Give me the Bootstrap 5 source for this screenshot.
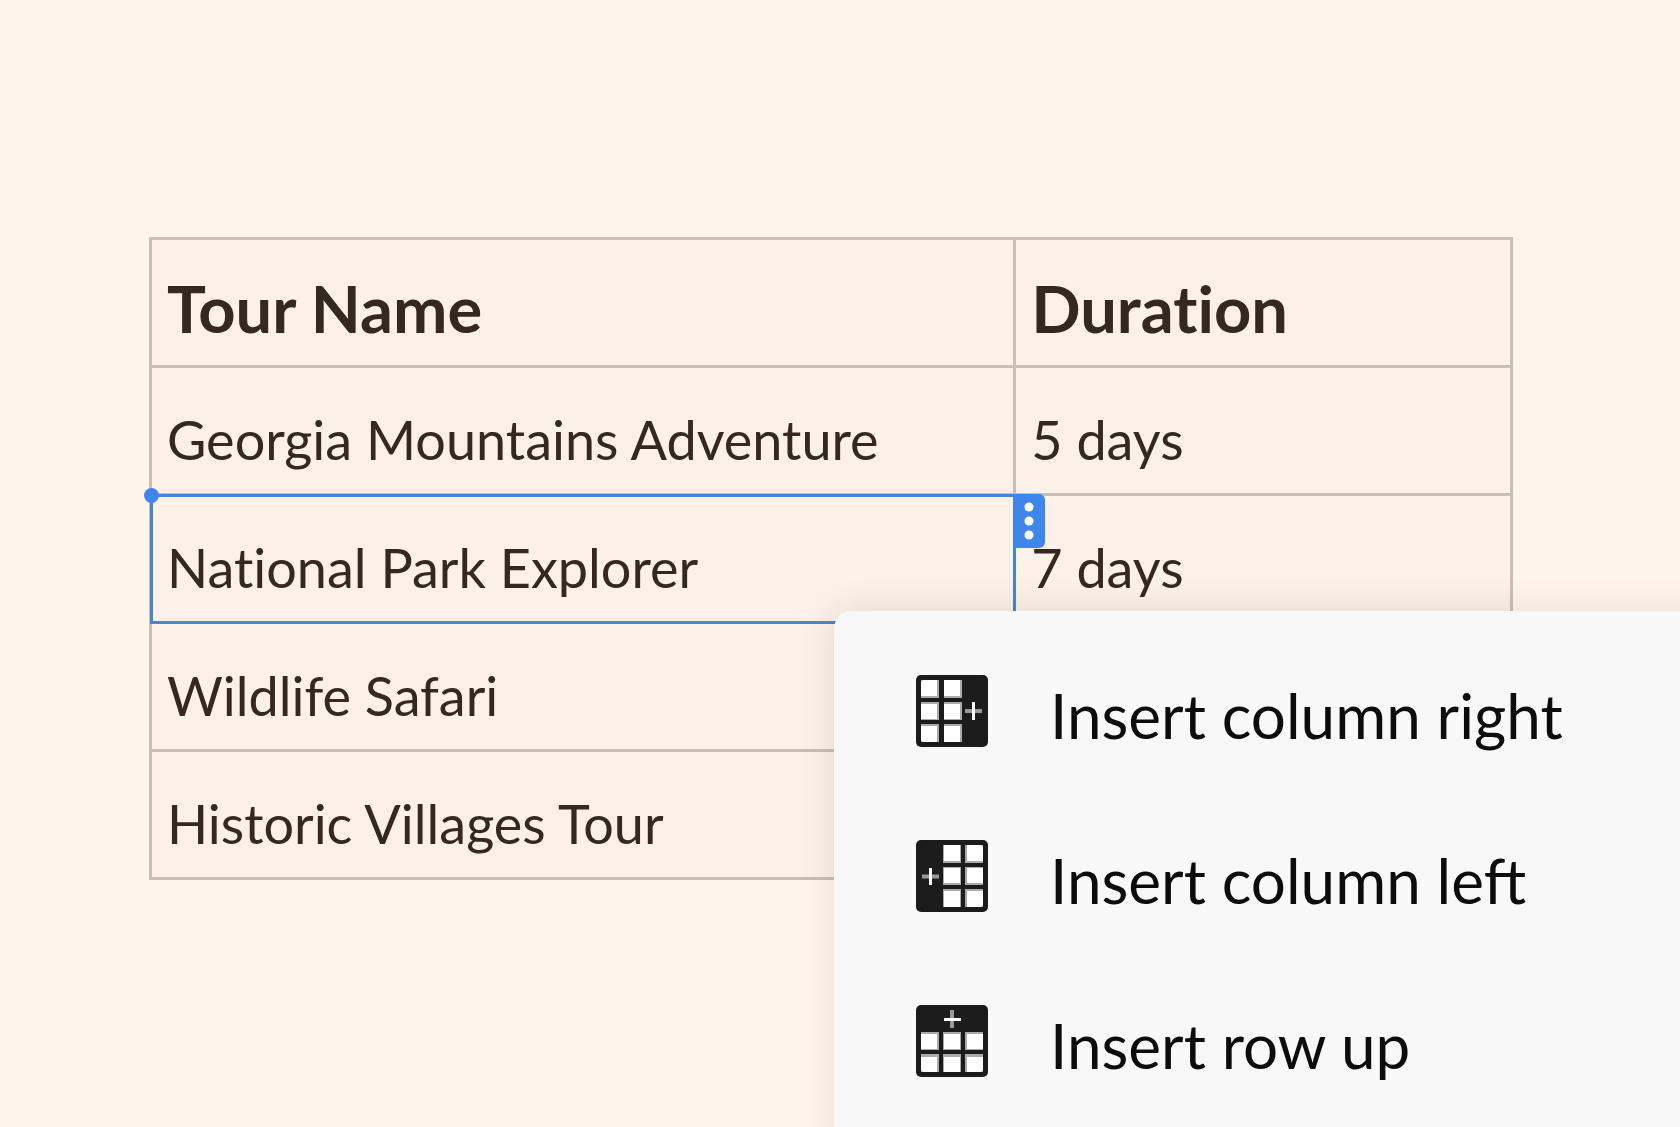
<!DOCTYPE html>
<html lang="en">
<head>
<meta charset="utf-8">
<meta name="viewport" content="width=device-width, initial-scale=1">
<title>Tours</title>
<link href="https://cdn.jsdelivr.net/npm/bootstrap@5.3.0/dist/css/bootstrap.min.css" rel="stylesheet">
<style>
  body { background: #fff5eb; font-family: Lato, sans-serif; font-variant-ligatures: none; }
  .stage { padding: 237px 167px 0 149px; }
  .tour-table { --bs-table-bg: #fbf1e8; --bs-table-color: #33291f; table-layout: fixed; border-collapse: collapse; color: #33291f; }
  .tour-table th, .tour-table td { height: 128px; padding: 18px 15px 0; border: 3px solid #c9bfb5; font-size: 54px; line-height: 64px; vertical-align: middle; white-space: nowrap; }
  .tour-table th { padding-top: 10px; font-size: 65px; font-weight: 700; }
  .name-col { width: 63.5%; }
  .selection { inset: -2px -3px -3px -2px; border: 3px solid #4a85d0; pointer-events: none; }
  .anchor-dot { left: -9px; top: -9px; width: 15px; height: 15px; background: #3e86ec; }
  .cell-handle { left: 100%; top: -3px; width: 32px; height: 54px; background: #3e86ec; border-radius: 0 6px 6px 0; pointer-events: auto; }
  .cell-menu { left: 834px; top: 611px; right: -48px; bottom: -48px; padding: 17px 0; background: #f8f8f8; border-radius: 18px; box-shadow: 0 0 36px rgba(60, 40, 20, .12); z-index: 5; }
  .cell-menu .dropdown-item { height: 165px; padding: 0 82px; gap: 62px; font-size: 62px; line-height: 72px; color: #0c0c0c; }
  .cell-menu .dropdown-item span { padding-top: 8px; }
  .cell-menu svg { width: 72px; height: 72px; flex: none; }
</style>
</head>
<body>
<main class="stage position-relative overflow-hidden vh-100">
  <table class="tour-table table w-100 mb-0">
    <colgroup><col class="name-col"><col></colgroup>
    <thead>
      <tr><th scope="col">Tour Name</th><th scope="col">Duration</th></tr>
    </thead>
    <tbody>
      <tr><td>Georgia Mountains Adventure</td><td>5 days</td></tr>
      <tr>
        <td class="position-relative">National Park Explorer
          <div class="selection position-absolute">
            <span class="anchor-dot position-absolute rounded-circle"></span>
            <button type="button" class="cell-handle btn position-absolute border-0 p-0 d-flex align-items-center justify-content-center" aria-label="Cell options">
              <svg width="10" height="38" viewBox="0 0 10 38" fill="#fff" aria-hidden="true"><circle cx="5" cy="5" r="4.5"/><circle cx="5" cy="19" r="4.5"/><circle cx="5" cy="33" r="4.5"/></svg>
            </button>
          </div>
        </td>
        <td>7 days</td>
      </tr>
      <tr><td>Wildlife Safari</td><td></td></tr>
      <tr><td>Historic Villages Tour</td><td></td></tr>
    </tbody>
  </table>

  <div class="cell-menu position-absolute d-flex flex-column">
    <button type="button" class="dropdown-item d-flex align-items-center">
      <svg viewBox="0 0 72 72" aria-hidden="true"><rect width="72" height="72" rx="5" fill="#1c1c1c"/><g fill="#aaa"><path d="M5 5h18v18H5zM28 5h18v18H28zM5 27h18v18H5zM28 27h18v18H28zM5 49h18v18H5zM28 49h18v18H28z"/></g><g fill="#fff"><path d="M7 5h14v16H5V7zM28 5h16v16H28zM5 29h16v15H5zM28 29h16v15H28zM5 51h16v16H7l-2-2zM28 51h16v16H28z"/></g><path d="M49 36h17" stroke="#999" stroke-width="4"/><path d="M57.500 27v18" stroke="#fff" stroke-width="3"/></svg>
      <span>Insert column right</span>
    </button>
    <button type="button" class="dropdown-item d-flex align-items-center">
      <svg viewBox="0 0 72 72" aria-hidden="true"><rect width="72" height="72" rx="5" fill="#1c1c1c"/><g fill="#aaa"><path d="M27 5h18v18H27zM49 5h18v18H49zM27 27h18v18H27zM49 27h18v18H49zM27 49h18v18H27zM49 49h18v18H49z"/></g><g fill="#fff"><path d="M28 5h16v16H28zM51 5h14l2 2v14H51zM28 28h16v15H28zM51 28h16v15H51zM28 51h16v16H28zM51 51h16v14l-2 2H51z"/></g><path d="M6 36.500h17" stroke="#999" stroke-width="4"/><path d="M14.500 28v17" stroke="#fff" stroke-width="3"/></svg>
      <span>Insert column left</span>
    </button>
    <button type="button" class="dropdown-item d-flex align-items-center">
      <svg viewBox="0 0 72 72" aria-hidden="true"><rect width="72" height="72" rx="5" fill="#1c1c1c"/><g fill="#aaa"><path d="M5 27h18v18H5zM27 27h18v18H27zM49 27h18v18H49zM5 49h18v18H5zM27 49h18v18H27zM49 49h18v18H49z"/></g><g fill="#fff"><path d="M5 29h16v15H5zM28 29h16v15H28zM51 29h16v15H51zM5 52h16v15H7l-2-2zM28 52h16v15H28zM51 52h16v13l-2 2H51z"/></g><path d="M36 5v18" stroke="#999" stroke-width="4"/><path d="M28 14.500h17" stroke="#fff" stroke-width="3"/></svg>
      <span>Insert row up</span>
    </button>
  </div>
</main>
<script src="https://cdn.jsdelivr.net/npm/bootstrap@5.3.0/dist/js/bootstrap.bundle.min.js"></script>
</body>
</html>
